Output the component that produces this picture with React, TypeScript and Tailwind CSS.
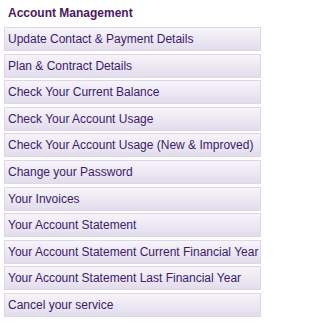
const links = [
  "Update Contact & Payment Details",
  "Plan & Contract Details",
  "Check Your Current Balance",
  "Check Your Account Usage",
  "Check Your Account Usage (New & Improved)",
  "Change your Password",
  "Your Invoices",
  "Your Account Statement",
  "Your Account Statement Current Financial Year",
  "Your Account Statement Last Financial Year",
  "Cancel your service",
];

export default function App() {
  return (
    <div
      className="w-[329px] h-[324px] bg-white pl-[4px] pt-[5px]"
      style={{ fontFamily: '"Liberation Sans", Arial, sans-serif' }}
    >
      <h2 className="text-[12px] font-bold text-[#4a1a5e] leading-[16px] pl-[4px] mb-[6px]">
        Account Management
      </h2>
      <ul className="w-[257px] flex flex-col gap-[2.6px]">
        {links.map((label) => (
          <li key={label}>
            <a
              href="#"
              className="block h-[24px] border border-[#dcd6e6] bg-gradient-to-b from-[#f6f4f9] to-[#e2dded] pl-[3px] text-[12px] leading-[22px] text-[#3d1a6e] whitespace-nowrap"
            >
              {label}
            </a>
          </li>
        ))}
      </ul>
    </div>
  );
}
